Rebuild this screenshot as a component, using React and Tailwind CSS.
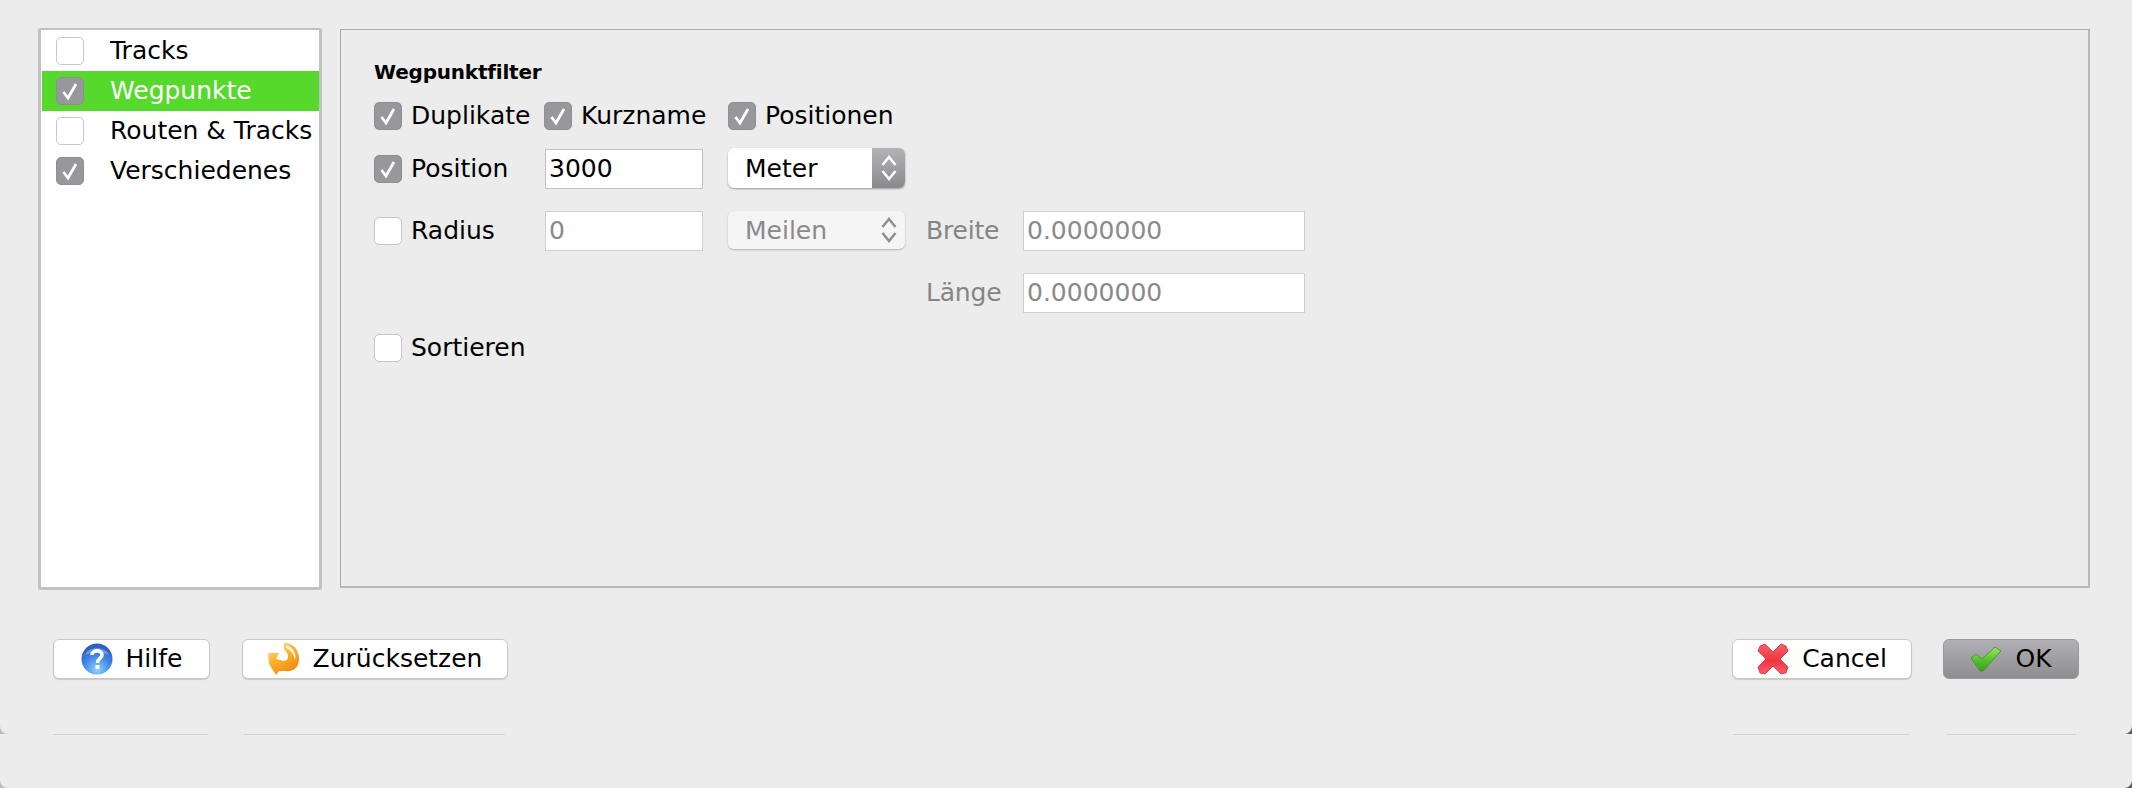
import React from 'react';

const fontStack = "font-['DejaVu_Sans','Liberation_Sans',sans-serif]";

const CheckBox = ({ checked }) => (
  <span
    className={`flex items-center justify-center w-[28px] h-[28px] shrink-0 rounded-[5px] border ${
      checked ? 'bg-[#98979c] border-[#8f8e93]' : 'bg-white border-[#c6c6c6]'
    }`}
  >
    {checked && (
      <svg width="20" height="20" viewBox="0 0 20 20" fill="none">
        <path d="M3.5 11 L8 17 L16 3" stroke="white" strokeWidth="2.8" />
      </svg>
    )}
  </span>
);

const ListRow = ({ label, checked, selected }) => (
  <div className={`flex items-center h-[40px] pl-[14px] ${selected ? 'bg-[#57d82c] text-white' : 'text-black'}`}>
    <CheckBox checked={checked} />
    <span className="ml-[26px] text-[25px] whitespace-nowrap">{label}</span>
  </div>
);

const LabeledCheck = ({ label, checked, className = '' }) => (
  <div className={`flex items-center ${className}`}>
    <CheckBox checked={checked} />
    <span className="ml-[9px] text-[25px] whitespace-nowrap">{label}</span>
  </div>
);

const TextBox = ({ value, disabled, className = '' }) => (
  <div
    className={`flex items-center h-[40px] pl-[3px] bg-white border text-[25px] ${
      disabled ? 'border-[#cfcfcf] text-[#8a8a8a]' : 'border-[#c0c0c0] text-black'
    } ${className}`}
  >
    {value}
  </div>
);

const Chevrons = ({ color }) => (
  <svg width="18" height="28" viewBox="0 0 18 28" fill="none">
    <path d="M2.5 11 L9 3 L15.5 11" stroke={color} strokeWidth="2.5" />
    <path d="M2.5 17 L9 25 L15.5 17" stroke={color} strokeWidth="2.5" />
  </svg>
);

const HelpIcon = () => (
  <svg width="32" height="32" viewBox="0 0 32 32">
    <defs>
      <radialGradient id="helpFill" cx="50%" cy="85%" r="75%">
        <stop offset="0%" stopColor="#8fd0fb" />
        <stop offset="60%" stopColor="#3f86e6" />
        <stop offset="100%" stopColor="#2c5fc0" />
      </radialGradient>
    </defs>
    <circle cx="16" cy="16" r="15.5" fill="url(#helpFill)" />
    <path d="M4 12 C7 3 25 3 28 12 C22 9 10 9 4 12 Z" fill="#ffffff" opacity="0.3" />
    <path d="M11 12 C11 6.5 21 6.5 21 12 C21 15.5 16.5 15.5 16.5 20" fill="none" stroke="white" strokeWidth="3.6" />
    <rect x="14.5" y="22" width="4" height="4" fill="white" />
  </svg>
);

const ResetIcon = () => (
  <svg width="32" height="34" viewBox="0 0 32 34">
    <defs>
      <linearGradient id="resetFill" x1="0" y1="0" x2="0.6" y2="1">
        <stop offset="0%" stopColor="#ffe3bd" />
        <stop offset="45%" stopColor="#fdb732" />
        <stop offset="100%" stopColor="#f08a12" />
      </linearGradient>
    </defs>
    <path
      d="M16 1 C26 1 31 8 31 17 C31 26 25 30 16 29 L11 29 L8 33 L1 22 L0 11 L11 11 L8 17 L16 19 C20 19 21 14 19 11 C18 9 17 8 16 7 Z"
      fill="url(#resetFill)"
    />
    <path d="M18 3 C25 5 29 12 27 18 C26 13 23 8 18 6 Z" fill="#fff1de" />
  </svg>
);

const CancelIcon = () => (
  <svg width="32" height="32" viewBox="0 0 32 32">
    <defs>
      <linearGradient id="cancelFill" x1="0" y1="0" x2="0" y2="1">
        <stop offset="0%" stopColor="#f9616a" />
        <stop offset="55%" stopColor="#f2343f" />
        <stop offset="100%" stopColor="#f7606a" />
      </linearGradient>
    </defs>
    <path
      d="M3 3 L8 1 L16 9 L24 1 L29 3 L31 8 L23 16 L31 24 L29 30 L24 31 L16 23 L8 31 L3 30 L1 24 L9 16 L1 8 Z"
      fill="url(#cancelFill)"
      stroke="#c8303a"
      strokeWidth="0.8"
    />
  </svg>
);

const OkIcon = () => (
  <svg width="32" height="26" viewBox="0 0 32 26">
    <defs>
      <linearGradient id="okFill" x1="0" y1="0" x2="0" y2="1">
        <stop offset="0%" stopColor="#9fe36f" />
        <stop offset="55%" stopColor="#54c328" />
        <stop offset="100%" stopColor="#3d9e1d" />
      </linearGradient>
    </defs>
    <path
      d="M1 12 L6 8 L12 13 L25 1 L31 5 L13 25 L10 25 Z"
      fill="url(#okFill)"
      stroke="#3e8c2a"
      strokeWidth="0.8"
    />
  </svg>
);

const FooterButton = ({ icon, label, className = '' }) => (
  <button
    className={`flex items-center justify-center gap-[13px] h-[40px] rounded-[6px] bg-white border border-[#c8c8c8] shadow-[0_1px_1px_rgba(0,0,0,0.15)] text-[25px] text-black ${className}`}
  >
    {icon}
    {label}
  </button>
);

const App = () => {
  return (
    <div
      className={`w-[2132px] h-[788px] overflow-hidden bg-[linear-gradient(to_right,#bdbdbd_50%,#5f6340_50%)] text-black ${fontStack}`}
    >
      {/* Dialog window */}
      <div className="h-[734px] bg-[#ececec] rounded-b-[8px]">
        <div className="flex pt-[28px] pl-[38px] pr-[42px]">
          {/* Category list */}
          <div className="w-[284px] h-[562px] bg-white border-[3px] border-t-2 border-[#c2c2c2] rounded-[2px] pt-[1px] pl-px">
            <ListRow label="Tracks" />
            <ListRow label="Wegpunkte" checked selected />
            <ListRow label="Routen & Tracks" />
            <ListRow label="Verschiedenes" checked />
          </div>

          {/* Filter panel */}
          <div className="ml-[18px] mt-px flex-1 h-[559px] border-t border-l border-r-2 border-b-2 border-t-[#a8a8a8] border-l-[#a8a8a8] border-r-[#b8b8b8] border-b-[#b8b8b8] pl-[33px] pt-[27px]">
            <div className="font-bold text-[20px] leading-[30px] tracking-[-0.2px]">Wegpunktfilter</div>

            <div className="flex items-center mt-[15px] h-[28px]">
              <LabeledCheck label="Duplikate" checked className="w-[170px]" />
              <LabeledCheck label="Kurzname" checked className="w-[184px]" />
              <LabeledCheck label="Positionen" checked />
            </div>

            <div className="flex items-center mt-[19px] h-[40px]">
              <LabeledCheck label="Position" checked className="w-[171px]" />
              <TextBox value="3000" className="w-[158px]" />
              <div className="flex ml-[25px] mb-[2px] w-[177px] h-[40px] rounded-[6px] overflow-hidden bg-white shadow-[0_1px_2px_rgba(0,0,0,0.35)]">
                <span className="flex-1 flex items-center pl-[17px] pt-[2px] text-[25px]">Meter</span>
                <span className="flex items-center justify-center w-[33px] bg-gradient-to-b from-[#b4b3b8] to-[#8a898e]">
                  <Chevrons color="white" />
                </span>
              </div>
            </div>

            <div className="flex items-center mt-[22px] h-[40px]">
              <LabeledCheck label="Radius" className="w-[171px]" />
              <TextBox value="0" disabled className="w-[158px]" />
              <div className="flex items-center ml-[25px] mb-[2px] w-[177px] h-[38px] rounded-[6px] bg-[#f5f5f5] shadow-[0_1px_2px_rgba(0,0,0,0.25)]">
                <span className="flex-1 pl-[17px] pt-[2px] text-[25px] text-[#8a8a8a]">Meilen</span>
                <span className="flex items-center justify-center w-[33px]">
                  <Chevrons color="#8f8f8f" />
                </span>
              </div>
              <span className="ml-[21px] w-[97px] text-[25px] tracking-[-0.2px] text-[#858585]">Breite</span>
              <TextBox value="0.0000000" disabled className="w-[282px]" />
            </div>

            <div className="flex items-center mt-[22px] h-[40px] pl-[552px]">
              <span className="w-[97px] text-[25px] tracking-[-0.2px] text-[#858585]">Länge</span>
              <TextBox value="0.0000000" disabled className="w-[282px]" />
            </div>

            <LabeledCheck label="Sortieren" className="mt-[16px]" />
          </div>
        </div>

        {/* Footer buttons */}
        <div className="flex items-start justify-between mt-[49px] pl-[53px] pr-[53px]">
          <div className="flex gap-[32px]">
            <FooterButton icon={<HelpIcon />} label="Hilfe" className="w-[157px]" />
            <FooterButton icon={<ResetIcon />} label="Zurücksetzen" className="w-[266px]" />
          </div>
          <div className="flex gap-[31px]">
            <FooterButton icon={<CancelIcon />} label="Cancel" className="w-[180px]" />
            <button className="flex items-center justify-center gap-[13px] w-[136px] h-[40px] rounded-[6px] bg-gradient-to-b from-[#b1b0b4] to-[#8e8d92] border border-[#98979b] text-[25px] text-black">
              <OkIcon />
              OK
            </button>
          </div>
        </div>
      </div>

      {/* Second window underneath, only the button edges show */}
      <div className="h-[54px] bg-[#ececec] rounded-b-[8px]">
        <div className="flex justify-between pl-[53px] pr-[56px]">
          <div className="flex gap-[36px]">
            <div className="w-[155px] h-px bg-[#d2d2d2]" />
            <div className="w-[261px] h-px bg-[#d2d2d2]" />
          </div>
          <div className="flex gap-[36px]">
            <div className="w-[177px] h-px bg-[#d2d2d2]" />
            <div className="w-[130px] h-px bg-[#d2d2d2]" />
          </div>
        </div>
      </div>
    </div>
  );
};

export default App;
